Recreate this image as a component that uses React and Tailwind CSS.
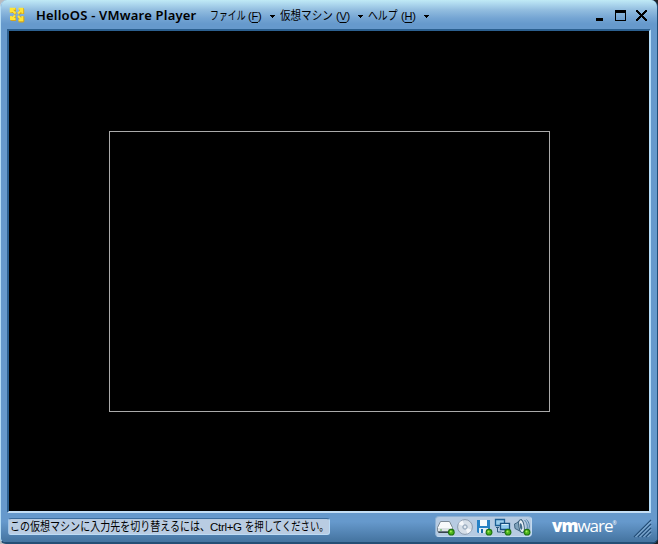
const JP = "font-['Liberation_Sans','Noto_Sans_CJK_JP',sans-serif]";

function Menu({ label, hotkey, width, labelWidth, labelScale }) {
  return (
    <div className={`flex h-5 shrink-0 items-center whitespace-nowrap text-[12px] leading-5 text-black ${JP} ${width}`}>
      <span className={`shrink-0 ${labelWidth}`}>
        <span className={`inline-block origin-left ${labelScale}`}>{label}</span>
      </span>
      <span className="-mt-px text-[11px] tracking-[-0.2px]">
        (<span className="underline underline-offset-2">{hotkey}</span>)
      </span>
      <svg className="mr-[5px] ml-auto" width="5" height="3" viewBox="0 0 5 3" shapeRendering="crispEdges">
        <path d="M0 0h5v1H0zM1 1h3v1H1zM2 2h1v1H2z" fill="#000" />
      </svg>
    </div>
  );
}

function PlayerLogo() {
  return (
    <svg width="16" height="16" viewBox="0 0 16 16" className="shrink-0">
      <g fill="none" stroke="#d3a41f" strokeWidth="2.8" strokeLinejoin="round">
        <path d="M7 2.500H2.500V6M10 2.500h3.800V7M14 9.500V14H9.500M2.500 9.500V12.500H7M3 3l4 4M13.500 3L9.500 7M14 14L9.500 9.500M6.500 9L3 12" />
      </g>
      <g fill="none" stroke="#ffe536" strokeWidth="1.900">
        <path d="M6.500 1.700H1.700V5.500M9.500 1.700h3.800V6.500M13.300 9v4.300H9.500M2 9v3h4.500M2.500 2.500l4 4M13 2.500L9 6.500M13.300 13.300L9 9M6 8.500L2.500 12" />
      </g>
    </svg>
  );
}

function Led({ x = 14, y = 14 }) {
  return (
    <g>
      <circle cx={x} cy={y} r="3.4" fill="#1f7410" />
      <circle cx={x} cy={y} r="2.3" fill="#4cb31c" />
      <circle cx={x - 0.5} cy={y - 0.7} r="1" fill="#a4ed56" />
    </g>
  );
}

function DriveIcon() {
  return (
    <svg width="18" height="18" viewBox="0 0 18 18">
      <path d="M3.5 3.5h9l3 6v3.500l-1 1.500h-13l-1-1.500V9.500z" fill="#f8fafb" stroke="#7d8b96" />
      <path d="M1 10h14v3.500H1z" fill="#dce3e6" />
      <path d="M1 13.500h13" stroke="#6b7881" />
      <path d="M1.500 14.500h12" stroke="#37434c" />
      <path d="M3 12h2" stroke="#45a83a" />
      <Led x={14.3} y={14.2} />
    </svg>
  );
}

function DiscIcon() {
  return (
    <svg width="18" height="18" viewBox="0 0 18 18">
      <circle cx="9" cy="9" r="7.400" fill="#d6dfe8" stroke="#8b9bae" />
      <path d="M9 9L2.500 6a7 7 0 0 1 4-3.500zM9 9l6.500 3a7 7 0 0 1-4 3.500z" fill="#f4f7fa" />
      <circle cx="9" cy="9" r="2.300" fill="#b6c5d5" stroke="#8fa2b5" strokeWidth=".8" />
      <circle cx="9" cy="9" r="1" fill="#f5f8fb" />
    </svg>
  );
}

function FloppyIcon() {
  return (
    <svg width="18" height="18" viewBox="0 0 18 18">
      <path d="M2 2h13v13H3l-1-1z" fill="#2681c5" />
      <path d="M5 2h7v6H5z" fill="#f4f9fc" />
      <path d="M4 10h9v5H4z" fill="#e4eef5" />
      <path d="M6 11h2v4H6z" fill="#176ba9" />
      <Led x={14} y={14.2} />
    </svg>
  );
}

function NetworkIcon() {
  return (
    <svg width="18" height="18" viewBox="0 0 18 18">
      <path d="M1.500 1.500h9v6h-9z" fill="#9bcdec" stroke="#1d5f94" strokeWidth="1.300" />
      <path d="M2 9.500h3M3.500 10v4h4" fill="none" stroke="#2c587a" />
      <path d="M6.500 5.500h9v6h-9z" fill="#8fcaee" stroke="#174f7e" strokeWidth="1.300" />
      <path d="M7.500 6.500h7" stroke="#d5eef9" />
      <path d="M8 14.500h6M11 12v2" stroke="#34556c" />
      <Led x={14} y={14.2} />
    </svg>
  );
}

function SpeakerIcon() {
  return (
    <svg width="18" height="18" viewBox="0 0 18 18">
      <path d="M1.500 6l2-1 5-3.500 1 13-5.500-3-2-1z" fill="#7fa3bd" stroke="#3e637f" />
      <ellipse cx="8.500" cy="8.200" rx="2.600" ry="6.500" transform="rotate(-10 8.500 8.200)" fill="#e8f0f5" stroke="#3e637f" />
      <ellipse cx="8" cy="8.500" rx="1.200" ry="3.200" transform="rotate(-10 8 8.500)" fill="#426b8b" />
      <path d="M11.500 2c3 3 3.500 7 2 11M13.500 1.500c3 3 3.500 7 2 10" fill="none" stroke="#4c80a5" />
      <Led x={14} y={14.2} />
    </svg>
  );
}

function WindowButtons() {
  return (
    <div className="mt-[9px] ml-auto flex items-start">
      <svg width="8" height="12" viewBox="0 0 8 12" shapeRendering="crispEdges">
        <path d="M0 9h7v3H0z" />
      </svg>
      <svg className="mt-px ml-[11px]" width="11" height="11" viewBox="0 0 11 11" shapeRendering="crispEdges">
        <path d="M0 0h11v11H0zM1 3v7h9V3z" fillRule="evenodd" />
      </svg>
      <svg className="mt-px ml-[10px]" width="11" height="11" viewBox="0 0 11 11" shapeRendering="crispEdges">
        <path d="M1 1l9 9M10 1l-9 9" stroke="#000" strokeWidth="2" strokeLinecap="square" />
      </svg>
    </div>
  );
}

export default function App() {
  return (
    <div className="h-[544px] w-[658px] overflow-hidden bg-[linear-gradient(90deg,#b8bcc0_0_50%,#1f2226_50%_100%)]">
      <div className="flex h-[544px] w-[658px] flex-col overflow-hidden rounded-t-[7px] rounded-b-[6px] border-r border-b-2 border-l border-r-[#204e77] border-b-[#244e75] border-l-[#b4dcf5] bg-[#6699cc]">
        <header className="flex h-[29px] shrink-0 bg-[linear-gradient(#c0eaf5_0px,#b2dcf0_3px,#92bddf_10px,#75a5d3_18px,#6699cc_24px)] pr-[10px] pl-2">
          <div className="pt-[7px]"><PlayerLogo /></div>
          <h1 className="mt-[5px] ml-[11px] w-[174px] whitespace-nowrap font-['Noto_Sans',sans-serif] text-[13px] leading-5 font-semibold tracking-[0.2px] text-black">
            HelloOS - VMware Player
          </h1>
          <nav className="mt-[6px] flex">
            <Menu label="ファイル" hotkey="F" width="w-[70px]" labelWidth="w-[38px]" labelScale="scale-x-[0.74]" />
            <Menu label="仮想マシン" hotkey="V" width="w-[88px]" labelWidth="w-[56px]" labelScale="scale-x-[0.88]" />
            <Menu label="ヘルプ" hotkey="H" width="w-[66px]" labelWidth="w-[33px]" labelScale="scale-x-[0.82]" />
          </nav>
          <WindowButtons />
        </header>
        <main className="mr-[6px] ml-[6px] h-[484px] shrink-0 border-2 border-t-[#2c6090] border-r-[#b4dcf8] border-b-[#c4def4] border-l-[#2c6090] bg-black pt-[100px] pl-[100px]">
          <div className="h-[281px] w-[441px] border border-[#aaaaaa]" />
        </main>
        <footer className="flex h-[29px] shrink-0 bg-[linear-gradient(#6699cc_0%,#6699cc_30%,#44739f_100%)] pr-[5px] pl-[7px]">
          <div className={`mt-[5px] flex h-[17px] w-[322px] shrink-0 rounded-[3px] border border-t-[#3c6c9c] border-r-[#bddcf6] border-b-[#bddcf6] border-l-[#a0c6e8] bg-[#b9cce2] pl-px text-[12px] leading-[17px] whitespace-nowrap text-black ${JP}`}>
            <span className="w-[200px] shrink-0">
              <span className="inline-block origin-left scale-x-[0.835]">この仮想マシンに入力先を切り替えるには、</span>
            </span>
            <span className="w-[35px] shrink-0 text-[11.5px] tracking-[-0.3px]">Ctrl+G</span>
            <span className="w-[82px] shrink-0">
              <span className="inline-block origin-left scale-x-[0.78]">を押してください。</span>
            </span>
          </div>
          <div className="mt-[3px] ml-[105px] flex h-[21px] w-[97px] shrink-0 items-center gap-px rounded-[4px] border border-t-[#8db1d4] border-r-[#c2daf0] border-b-[#c2daf0] border-l-[#8db1d4] bg-[#b6cbe2] pl-px">
            <DriveIcon /><DiscIcon /><FloppyIcon /><NetworkIcon /><SpeakerIcon />
          </div>
          <div className="mt-[3px] ml-[20px] flex w-[80px] font-['Open_Sans',sans-serif] text-[17px] leading-[19px] tracking-[-1px] text-white">
            <span className="font-extrabold">vm</span><span className="font-medium">ware</span><span className="mt-[-2px] text-[5px]">®</span>
          </div>
          <svg className="mt-[6px] ml-auto" width="19" height="19" viewBox="0 0 19 19">
            <path d="M1 18L18 1M5 18L18 5M9 18l9-9M13 18l5-5" stroke="#244e78" strokeWidth="1.3" />
            <path d="M2.500 18L18 2.500M6.500 18L18 6.500M10.500 18l7.500-7.500M14.500 18l3.500-3.500" stroke="#acd0ee" strokeWidth=".8" />
          </svg>
        </footer>
      </div>
    </div>
  );
}
